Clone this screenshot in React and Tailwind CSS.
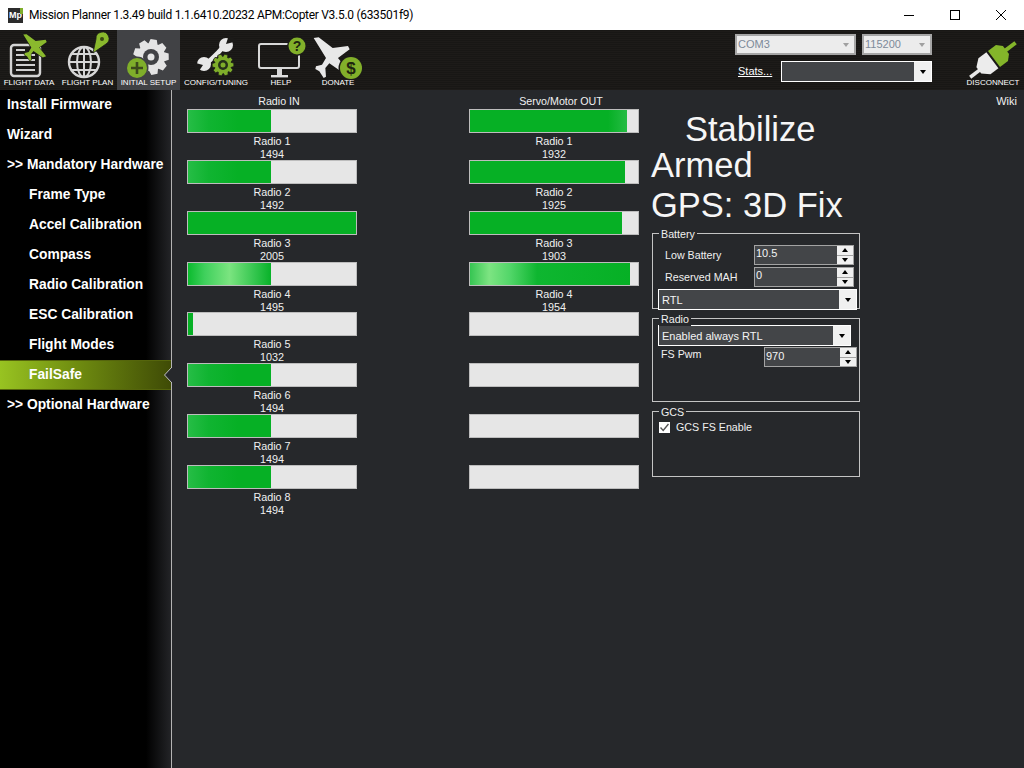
import React from 'react';

const radioIn = [1494, 1492, 2005, 1495, 1032, 1494, 1494, 1494];
const servoOut = [1932, 1925, 1903, 1954];

const menu = [
  { label: 'Install Firmware' },
  { label: 'Wizard' },
  { label: '>> Mandatory Hardware' },
  { label: 'Frame Type', sub: true },
  { label: 'Accel Calibration', sub: true },
  { label: 'Compass', sub: true },
  { label: 'Radio Calibration', sub: true },
  { label: 'ESC Calibration', sub: true },
  { label: 'Flight Modes', sub: true },
  { label: 'FailSafe', sub: true, active: true },
  { label: '>> Optional Hardware' },
];

function gearPath(cx, cy, outer, root, teeth) {
  const pts = [];
  const step = (Math.PI * 2) / teeth;
  for (let i = 0; i < teeth; i++) {
    const a = i * step;
    [[-0.5, root], [-0.28, outer], [0.22, outer], [0.44, root]].forEach(([t, r]) => {
      pts.push(`${(cx + Math.cos(a + t * step) * r).toFixed(2)},${(cy + Math.sin(a + t * step) * r).toFixed(2)}`);
    });
  }
  return `M${pts.join(' L')} Z`;
}

// traced from the donate icon, in 3x units
const PLANE =
  'M5,12 L20,10 L62,42 L108,36 L113,46 L78,72 L110,112 L95,118 L52,88 L40,102 L42,128 L35,132 L22,112 L10,105 L12,97 L30,92 L42,72 Z';

function FlightDataIcon() {
  return (
    <svg width="58" height="47" viewBox="0 30 58 47">
      <rect x="11" y="43" width="29" height="31" rx="3" fill="none" stroke="#d4d4d4" strokeWidth="2.4" />
      {[52, 57, 62, 67].map((y) => (
        <rect key={y} x="16" y={y} width="19" height="2" fill="#d0d0d0" />
      ))}
      <rect x="16" y="47" width="9" height="2" fill="#d0d0d0" />
      <path d={PLANE} fill="#8ab92d" stroke="#1b1a18" strokeWidth="5" paintOrder="stroke" transform="translate(22.2,30) scale(0.217)" />
    </svg>
  );
}

function FlightPlanIcon() {
  return (
    <svg width="59" height="47" viewBox="58 30 59 47">
      <g fill="none" stroke="#d6d6d6" strokeWidth="2">
        <circle cx="84" cy="60" r="15" strokeWidth="2.4" />
        <ellipse cx="84" cy="60" rx="7" ry="15" />
        <path d="M84,45 V75 M69,60 H99 M71,52 H97 M71,68 H97" />
      </g>
      <path d="M93,51 L96,37 A6.5,6.5 0 1 1 106,42 Z" fill="#8ab92d" stroke="#1b1a18" strokeWidth="0.8" />
      <circle cx="102" cy="37" r="2" fill="#3a4a12" />
    </svg>
  );
}

function InitialSetupIcon() {
  return (
    <svg width="63" height="47" viewBox="117 30 63 47">
      <path d={gearPath(151, 55, 18, 14, 9)} fill="#e4e4e4" />
      <circle cx="151" cy="55" r="8" fill="#414245" />
      <circle cx="151" cy="55" r="3.5" fill="#e4e4e4" />
      <circle cx="137" cy="66" r="11.5" fill="#414245" />
      <circle cx="137" cy="66" r="10" fill="#7fae2a" />
      <path d="M137,60 V72 M131,66 H143" stroke="#3c4a1c" strokeWidth="2.6" />
    </svg>
  );
}

function ConfigIcon() {
  return (
    <svg width="72" height="47" viewBox="180 30 72 47">
      <path d="M206,62 C212,56 216,54 224,44" stroke="#e8e8e8" strokeWidth="4.5" fill="none" />
      <circle cx="226" cy="43" r="7" fill="#e8e8e8" />
      <path d="M226,42 L229,33 L238,39 Z" fill="#1b1a18" />
      <circle cx="204" cy="62" r="7" fill="#e8e8e8" />
      <path d="M203,63 L192,60 L197,72 Z" fill="#1b1a18" />
      <path d={gearPath(223, 63, 11, 8.5, 10)} fill="#7fae2a" stroke="#1b1a18" strokeWidth="0.8" />
      <circle cx="223" cy="63" r="5" fill="#26301a" />
      <circle cx="223" cy="63" r="2.5" fill="#7fae2a" />
    </svg>
  );
}

function HelpIcon() {
  return (
    <svg width="58" height="47" viewBox="252 30 58 47">
      <rect x="259" y="42" width="40" height="24" rx="2" fill="none" stroke="#d8d8d8" strokeWidth="2" />
      <rect x="277" y="67" width="5" height="6" fill="#d8d8d8" />
      <rect x="271" y="73" width="17" height="2.4" fill="#e0e0e0" />
      <circle cx="297" cy="44" r="10" fill="#1b1a18" />
      <circle cx="297" cy="44" r="8.5" fill="#82b02a" />
      <text x="297" y="49" textAnchor="middle" fontSize="14" fontWeight="700" fill="#1e240f" fontFamily="Liberation Sans, sans-serif">?</text>
    </svg>
  );
}

function DonateIcon() {
  return (
    <svg width="56" height="47" viewBox="310 30 56 47">
      <path d={PLANE} fill="#e8e8e8" transform="translate(312,32) scale(0.3333)" />
      <circle cx="351" cy="66" r="12.5" fill="#1b1a18" />
      <circle cx="351" cy="66" r="11" fill="#82b02a" />
      <text x="351" y="72" textAnchor="middle" fontSize="17" fontWeight="700" fill="#1e240f" fontFamily="Liberation Sans, sans-serif">$</text>
    </svg>
  );
}

function PlugIcon() {
  return (
    <svg width="62" height="47" viewBox="962 30 62 47">
      <g transform="translate(990,60) rotate(53)">
        <rect x="-1.5" y="10" width="3.5" height="15" fill="#e8e8e8" />
        <path d="M-10,-3 H10 V7 L4,14 H-4 L-10,7 Z" fill="#ececec" />
        <path d="M-10,-5 H10 V-15 L5,-20 H-5 L-10,-15 Z" fill="#84b52a" />
        <rect x="-2" y="-32" width="4" height="13" fill="#84b52a" />
      </g>
    </svg>
  );
}

const tabs = [
  { label: 'FLIGHT DATA', icon: FlightDataIcon, width: 'w-[58px]' },
  { label: 'FLIGHT PLAN', icon: FlightPlanIcon, width: 'w-[59px]' },
  { label: 'INITIAL SETUP', icon: InitialSetupIcon, width: 'w-[63px]', active: true },
  { label: 'CONFIG/TUNING', icon: ConfigIcon, width: 'w-[72px]' },
  { label: 'HELP', icon: HelpIcon, width: 'w-[58px]' },
  { label: 'DONATE', icon: DonateIcon, width: 'w-[56px]' },
];

function Tab({ label, icon: Icon, width, active }) {
  return (
    <div className={`${width} h-[60px] flex flex-col items-center pt-[2px] ${active ? 'bg-[#414245]' : ''}`}>
      <Icon />
      <span className="-mt-[1px] text-[8px] leading-[10px] text-white whitespace-nowrap">{label}</span>
    </div>
  );
}

function Arrow({ up, color = 'border-t-black' }) {
  return (
    <span
      className={`block w-0 h-0 border-x-[3.5px] border-x-transparent ${
        up ? 'border-b-[4px] border-b-black' : `border-t-[4px] ${color}`
      }`}
    />
  );
}

function Combo({ value, className }) {
  return (
    <div className={`flex border border-white bg-[#434548] h-[21px] ${className}`}>
      <span className="flex-1 px-[3px] text-[11px] leading-[21px] text-[#f4f4f4]">{value}</span>
      <span className="w-[17px] bg-[#f0f0f0] flex items-center justify-center">
        <Arrow />
      </span>
    </div>
  );
}

function Disabled({ value, className }) {
  return (
    <div className={`flex items-center h-[21px] border-2 border-[#a6a6a6] bg-[#ececec] ${className}`}>
      <span className="flex-1 px-[1px] text-[11px] text-[#7d8a99]">{value}</span>
      <span className="w-[17px] flex justify-center">
        <Arrow color="border-t-[#a0a0a0]" />
      </span>
    </div>
  );
}

function Spinner({ value, className, leading = 'leading-[14px]' }) {
  return (
    <div className={`flex h-[20px] border-[1.5px] border-[#a3a3a3] bg-[#434548] ${className}`}>
      <span className={`flex-1 px-[1px] text-[11px] ${leading} text-[#f4f4f4]`}>{value}</span>
      <span className="w-[16px] flex flex-col gap-[1px] bg-[#a3a3a3]">
        <span className="flex-1 bg-[#f0f0f0] flex items-center justify-center"><Arrow up /></span>
        <span className="flex-1 bg-[#f0f0f0] flex items-center justify-center"><Arrow /></span>
      </span>
    </div>
  );
}

function Group({ title, className, children }) {
  return (
    <div className={`relative border border-[#c4c4c4] ${className}`}>
      <span className="absolute -top-[6px] left-[6px] bg-[#26282b] px-[2px] text-[10.7px] leading-[13px] text-[#f0f0f0]">
        {title}
      </span>
      {children}
    </div>
  );
}

function Bar({ value, fill = 'bg-[#06b025]' }) {
  const pct = Math.max(0, Math.min(100, (value - 1000) / 10));
  return (
    <div className="h-[24px] border border-[#bdbdbd] bg-[#e6e6e6]">
      {value > 0 && <div className={`h-full ${fill}`} style={{ width: `${pct}%` }} />}
    </div>
  );
}

const softFill = 'bg-[linear-gradient(90deg,#26bd46_0,#10b431_25%,#06b025_60%)]';
const glowIn = 'bg-[linear-gradient(90deg,#0bbb2e_0,#3fd05c_20%,#7be480_50%,#35c64f_80%,#08b229_100%)]';
const glowOut = 'bg-[linear-gradient(90deg,#36c552_0,#7de482_12%,#52d669_25%,#0eb630_42%,#06b025_100%)]';
const endFill = 'bg-[linear-gradient(90deg,#06b025_0,#06b025_88%,#25bc44_100%)]';

const inFills = [softFill, softFill, 'bg-[#06b025]', glowIn, 'bg-[#06b025]', softFill, softFill, softFill];
const outFills = [endFill, 'bg-[#06b025]', 'bg-[#06b025]', glowOut];

function BarColumn({ title, values, fills, total }) {
  return (
    <div className="w-[170px] shrink-0">
      <div className="h-[19px] pt-[5px] pl-[14px] text-center text-[10.7px] leading-[13px] text-[#f0f0f0]">{title}</div>
      {Array.from({ length: total }).map((_, i) => (
        <div key={i} className="h-[50.85px]">
          <Bar value={values[i] || 0} fill={fills[i]} />
          {values[i] && (
            <div className="pt-[2px] text-center text-[10.8px] leading-[13px] text-[#f0f0f0]">
              <div>Radio {i + 1}</div>
              <div>{values[i]}</div>
            </div>
          )}
        </div>
      ))}
    </div>
  );
}

function SideItem({ label, sub, active }) {
  return (
    <div
      className={`relative h-[30px] flex items-center text-[13.8px] font-bold text-white ${sub ? 'pl-[29px]' : 'pl-[7px]'} ${
        active ? 'bg-[linear-gradient(90deg,#98c321,#6f8c10_45%,#3f4b06)] border-y border-[#55650c]' : ''
      }`}
    >
      <span className="whitespace-nowrap">{label}</span>
      {active && (
        <svg className="absolute -right-[1px] top-[6px]" width="8" height="16" viewBox="0 0 8 16">
          <path d="M8,0 L0.5,8 L8,16 Z" fill="#26282b" />
          <path d="M8,0 L0.5,8 L8,16" fill="none" stroke="#c4c4c4" strokeWidth="1" />
        </svg>
      )}
    </div>
  );
}

export default function App() {
  return (
    <div className="w-[1024px] h-[768px] flex flex-col overflow-hidden bg-[#26282b] font-['Liberation_Sans',Arial,sans-serif]">
      {/* title bar */}
      <div className="h-[30px] shrink-0 bg-white flex items-center">
        <div className="ml-[8px] w-[15px] h-[15px] bg-[#2c2c2c] flex items-center overflow-hidden relative">
          <span className="text-[9px] font-bold text-white leading-none pl-[1px]">Mp</span>
          <span className="absolute right-0 top-0 w-[3px] h-[6px] bg-[#7fae2a]" />
        </div>
        <span className="ml-[6px] text-[12px] tracking-[-0.29px] text-black font-['Roboto','Noto_Sans',sans-serif] whitespace-nowrap">
          Mission Planner 1.3.49 build 1.1.6410.20232 APM:Copter V3.5.0 (633501f9)
        </span>
        <div className="ml-auto flex">
          <div className="w-[46px] h-[30px] flex items-center justify-center">
            <span className="block w-[10px] h-[1px] bg-black" />
          </div>
          <div className="w-[46px] h-[30px] flex items-center justify-center">
            <span className="block w-[10px] h-[10px] border border-black" />
          </div>
          <div className="w-[46px] h-[30px] flex items-center justify-center">
            <svg width="10" height="10" viewBox="0 0 10 10">
              <path d="M0,0 L10,10 M10,0 L0,10" stroke="#000" strokeWidth="1" />
            </svg>
          </div>
        </div>
      </div>

      {/* toolbar */}
      <div className="h-[60px] shrink-0 flex bg-[repeating-linear-gradient(0deg,#1d1b19_0px,#1d1b19_1px,#181715_1px,#181715_2px)]">
        {tabs.map((t) => (
          <Tab key={t.label} {...t} />
        ))}
        <div className="ml-auto w-[197px] mr-[30px] pt-[4px] flex flex-col gap-[6px]">
          <div className="flex justify-between">
            <Disabled value="COM3" className="w-[121px]" />
            <Disabled value="115200" className="w-[70px]" />
          </div>
          <div className="flex justify-between items-center">
            <span className="pl-[3px] text-[11px] text-white underline">Stats...</span>
            <Combo value="" className="w-[151px]" />
          </div>
        </div>
        <div className="w-[62px] h-[60px] flex flex-col items-center pt-[2px]">
          <PlugIcon />
          <span className="-mt-[1px] text-[8px] leading-[10px] text-white whitespace-nowrap">DISCONNECT</span>
        </div>
      </div>

      <div className="flex-1 flex min-h-0">
        {/* side menu */}
        <div className="w-[172px] shrink-0 border-r border-[#b4b4b4] bg-[linear-gradient(90deg,#000_0,#000_146px,#232427_171px)]">
          {menu.map((m) => (
            <SideItem key={m.label} {...m} />
          ))}
        </div>

        {/* failsafe page */}
        <div className="flex-1 flex pl-[15px]">
          <BarColumn title="Radio IN" values={radioIn} fills={inFills} total={8} />
          <div className="w-[112px] shrink-0" />
          <BarColumn title="Servo/Motor OUT" values={servoOut} fills={outFills} total={8} />
          <div className="ml-[13px] w-[208px] shrink-0">
            <div className="mt-[19px] -ml-[1px] text-[34.5px] leading-[40px] text-[#f6f6f6]">
              <div className="pl-[34px]">Stabilize</div>
              <div className="-mt-[4px]">Armed</div>
              <div>GPS: 3D Fix</div>
            </div>
            <Group title="Battery" className="mt-[8px] h-[76px]">
              <div className="pt-[11px] flex flex-col gap-[2px]">
                <div className="flex items-center">
                  <span className="w-[101px] pl-[12px] text-[10.7px] text-[#f0f0f0]">Low Battery</span>
                  <Spinner value="10.5" className="w-[100px]" />
                </div>
                <div className="flex items-center">
                  <span className="w-[101px] pl-[12px] text-[10.7px] text-[#f0f0f0]">Reserved MAH</span>
                  <Spinner value="0" className="w-[100px]" />
                </div>
                <Combo value="RTL" className="ml-[5px] w-[199px]" />
              </div>
            </Group>
            <Group title="Radio" className="mt-[9px] h-[84px]">
              <div className="pt-[6px]">
                <Combo value="Enabled always RTL" className="ml-[5px] w-[193px]" />
                <div className="mt-[1px] flex">
                  <span className="w-[111px] pl-[8px] pt-[1px] text-[10.7px] leading-[13px] text-[#f0f0f0]">FS Pwm</span>
                  <Spinner value="970" className="w-[93px]" leading="leading-[17px]" />
                </div>
              </div>
            </Group>
            <Group title="GCS" className="mt-[9px] h-[66px]">
              <div className="pt-[9px] pl-[6px] flex items-center gap-[6px]">
                <span className="w-[11px] h-[11px] bg-white flex items-center justify-center">
                  <svg width="9" height="9" viewBox="0 0 9 9">
                    <path d="M0.5,4.5 L3.2,7.5 L8.5,1" fill="none" stroke="#555" strokeWidth="1.4" />
                  </svg>
                </span>
                <span className="text-[10.7px] leading-[13px] text-[#f0f0f0]">GCS FS Enable</span>
              </div>
            </Group>
          </div>
          <div className="ml-auto pr-[7px] pt-[5px] text-[11px] leading-[13px] text-[#f0f0f0]">Wiki</div>
        </div>
      </div>
    </div>
  );
}
